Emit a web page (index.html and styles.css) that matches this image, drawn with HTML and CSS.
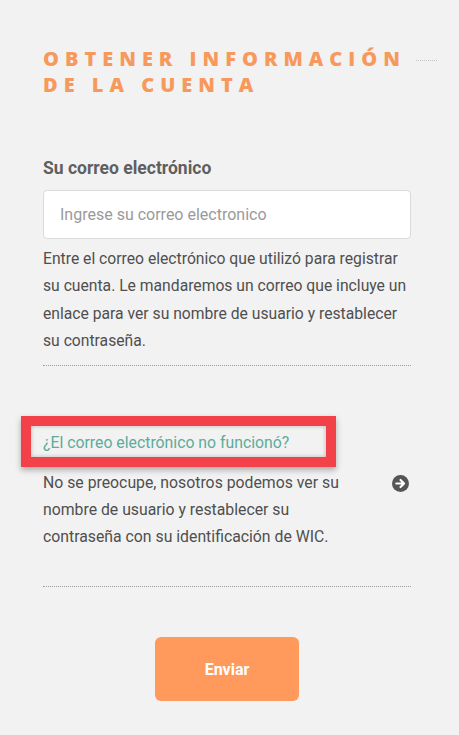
FILE: index.html
```html
<!DOCTYPE html>
<html>
<head>
    <title>Obtener información de la cuenta</title>
    <link rel="stylesheet" href="styles.css">
</head>
<body>
    <div id="page">
        <div class="header">
            <h1 class="title">Obtener información de la cuenta</h1>
            <span class="header-rule"></span>
        </div>

        <form id="account-form">
            <label for="email" class="field-label">Su correo electrónico</label>
            <input type="email" id="email" class="field-input" placeholder="Ingrese su correo electronico">
            <p class="help-text">Entre el correo electrónico que utilizó para registrar su cuenta. Le mandaremos un correo que incluye un enlace para ver su nombre de usuario y restablecer su contraseña.</p>

            <hr class="divider">

            <div class="alt-option">
                <div class="alt-link-wrap">
                    <a href="#" class="alt-link">¿El correo electrónico no funcionó?</a>
                    <span class="highlight"></span>
                </div>
                <div class="alt-row">
                    <p class="alt-text">No se preocupe, nosotros podemos ver su nombre de usuario y restablecer su contraseña con su identificación de WIC.</p>
                    <svg class="arrow-icon" width="17" height="17" viewBox="0 0 16 16">
                        <circle cx="8" cy="8" r="8" fill="#555"/>
                        <path d="M4 8h7M8 4.6L11.4 8 8 11.4" fill="none" stroke="#fff" stroke-width="2" stroke-linecap="round" stroke-linejoin="round"/>
                    </svg>
                </div>
            </div>

            <hr class="divider divider-bottom">

            <div class="actions">
                <button type="button" id="send-button">Enviar</button>
            </div>
        </form>
    </div>
</body>
</html>
```

FILE: styles.css
```css
body {
    font-family: Roboto, "Liberation Sans", sans-serif;
    background-color: #f2f2f2;
    margin: 0;
    padding: 0;
}

#page {
    padding: 46px 0 0 43px;
}

.header {
    display: flex;
    align-items: flex-start;
}

h1.title {
    font-family: "Open Sans", "Liberation Sans", sans-serif;
    font-weight: 800;
    font-size: 20px;
    line-height: 26px;
    letter-spacing: 6px;
    text-transform: uppercase;
    color: #f7995c;
    width: 368px;
    margin: 0;
}

.header-rule {
    width: 21px;
    margin: 14px 0 0 5px;
    border-top: 1px dotted #c4c4c4;
}

#account-form {
    width: 368px;
    margin-top: 60px;
}

.field-label {
    display: block;
    font-size: 17.5px;
    font-weight: 700;
    line-height: 20px;
    color: #5f5f5f;
}

.field-input {
    display: block;
    box-sizing: border-box;
    width: 368px;
    height: 49px;
    margin-top: 12px;
    padding: 0 16px;
    font-family: Roboto, "Liberation Sans", sans-serif;
    font-size: 16px;
    color: #444;
    background-color: #fff;
    border: 1px solid #dadada;
    border-radius: 4px;
}

.field-input::placeholder {
    color: #9a9a9a;
}

.help-text {
    font-size: 15.7px;
    line-height: 27.3px;
    color: #4f4f4f;
    margin: 6px 0 0;
}

hr.divider {
    border: none;
    border-top: 1px dotted #9e9e9e;
    margin: 11px 0 0;
}

.alt-option {
    margin-top: 63px;
}

.alt-link-wrap {
    position: relative;
}

a.alt-link {
    font-size: 15.8px;
    line-height: 27px;
    color: #5aac9b;
    text-decoration: none;
}

/* red annotation box around the link */
.highlight {
    position: absolute;
    left: -22px;
    top: -13px;
    width: 315px;
    height: 51px;
    box-sizing: border-box;
    border: 10px solid #f3414a;
    box-shadow: 0 3px 6px rgba(0, 0, 0, 0.3), inset 0 0 4px rgba(0, 0, 0, 0.25);
}

.alt-row {
    display: flex;
    align-items: flex-start;
    margin-top: 14px;
}

.alt-text {
    font-size: 15.8px;
    line-height: 26.7px;
    color: #4f4f4f;
    width: 318px;
    margin: 0;
}

.arrow-icon {
    margin: 5px 2px 0 auto;
    flex-shrink: 0;
}

hr.divider-bottom {
    margin-top: 36px;
}

.actions {
    display: flex;
    justify-content: center;
    margin-top: 50px;
}

#send-button {
    width: 144px;
    height: 64px;
    font-family: Roboto, "Liberation Sans", sans-serif;
    font-size: 16px;
    font-weight: 700;
    color: #fff;
    background-color: #ff9a5c;
    border: none;
    border-radius: 6px;
    cursor: pointer;
}
```
